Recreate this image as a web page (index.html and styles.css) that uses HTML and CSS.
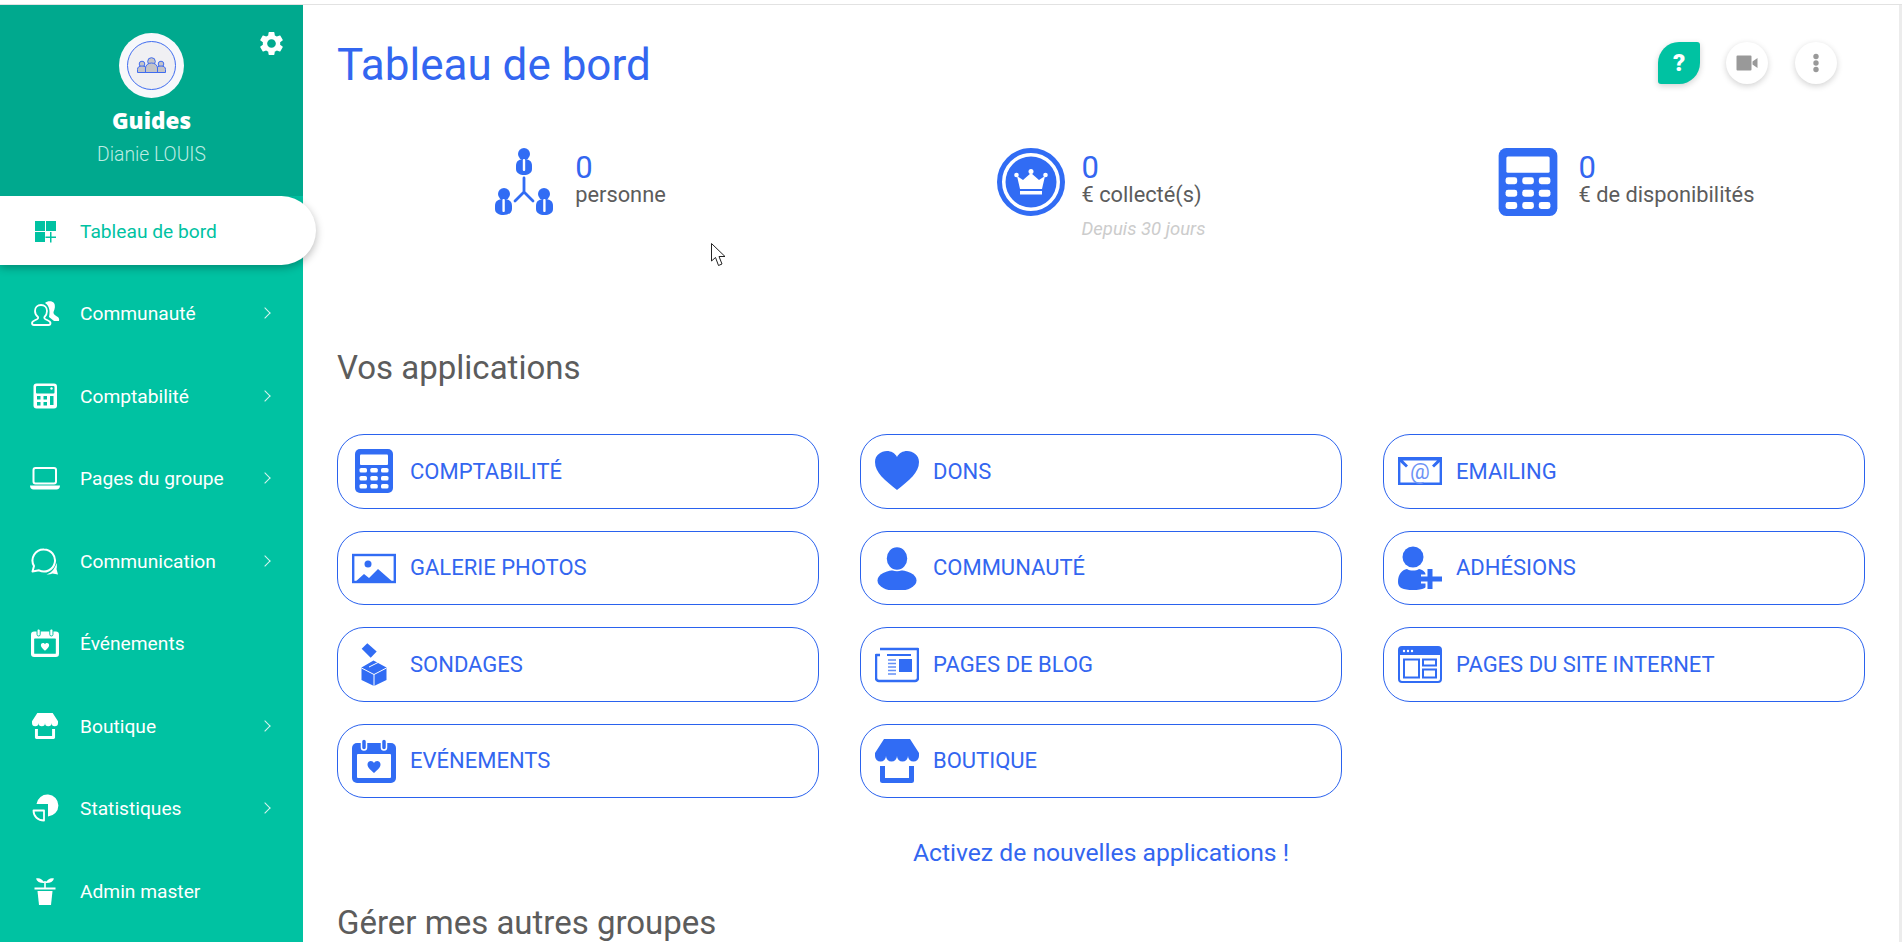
FILE: index.html
```html
<!DOCTYPE html>
<html lang="fr">
<head>
<meta charset="utf-8">
<title>Tableau de bord</title>
<link rel="stylesheet" href="styles.css">
</head>
<body>
<svg class="defs" xmlns="http://www.w3.org/2000/svg">
  <symbol id="i-calc" viewBox="0 0 44 44">
    <rect x="3" y="0" width="38" height="44" rx="5" fill="currentColor"/>
    <g class="hole">
      <rect x="8" y="5.500" width="28" height="10.500" rx="1"/>
      <rect x="7.500" y="19" width="7.500" height="4.500" rx="1.600"/><rect x="18.300" y="19" width="7.500" height="4.500" rx="1.600"/><rect x="29" y="19" width="7.500" height="4.500" rx="1.600"/>
      <rect x="7.500" y="27" width="7.500" height="4.500" rx="1.600"/><rect x="18.300" y="27" width="7.500" height="4.500" rx="1.600"/><rect x="29" y="27" width="7.500" height="4.500" rx="1.600"/>
      <rect x="7.500" y="35" width="7.500" height="4.500" rx="1.600"/><rect x="18.300" y="35" width="7.500" height="4.500" rx="1.600"/><rect x="29" y="35" width="7.500" height="4.500" rx="1.600"/>
    </g>
  </symbol>
  <symbol id="i-event" viewBox="0 0 44 44">
    <rect x="0" y="4" width="44" height="40" rx="5" fill="currentColor"/>
    <rect class="hole" x="5" y="15" width="34" height="24" rx="1"/>
    <rect class="ring" x="9.500" y="0" width="5" height="11" rx="2.500" fill="currentColor"/>
    <rect class="ring" x="29.500" y="0" width="5" height="11" rx="2.500" fill="currentColor"/>
    <path d="M22 34C18 30.500 15.500 28.500 15.500 25.500C15.500 23.300 17.200 22 18.800 22C20.200 22 21.400 22.800 22 24C22.600 22.800 23.800 22 25.200 22C26.800 22 28.500 23.300 28.500 25.500C28.500 28.500 26 30.500 22 34Z" fill="currentColor"/>
  </symbol>
  <symbol id="i-shop" viewBox="0 0 44 44">
    <path d="M9 0H35L44 14V17A5.500 5.500 0 0 1 33 17A5.500 5.500 0 0 1 22 17A5.500 5.500 0 0 1 11 17A5.500 5.500 0 0 1 0 17V14Z" fill="currentColor"/>
    <path d="M7.500 27V41.500H36.500V27" fill="none" stroke="currentColor" stroke-width="5" stroke-linejoin="round"/>
  </symbol>
</svg>

<div class="topline"></div>
<div class="app">
  <aside class="sidebar">
    <header class="profile">
      <svg class="gear" viewBox="0 0 24 24"><path fill="currentColor" d="M19.140 12.940c.04-.3.06-.61.06-.94 0-.32-.02-.64-.07-.94l2.030-1.580c.18-.14.23-.41.12-.61l-1.920-3.320c-.12-.22-.37-.29-.59-.22l-2.390.96c-.5-.38-1.030-.7-1.620-.94l-.36-2.540c-.04-.24-.24-.41-.48-.41h-3.840c-.24 0-.43.17-.47.41l-.36 2.540c-.59.24-1.130.57-1.620.94l-2.390-.96c-.22-.08-.47 0-.59.22L2.740 8.870c-.12.21-.08.47.12.61l2.030 1.580c-.05.3-.09.63-.09.94s.02.64.07.94l-2.030 1.580c-.18.14-.23.41-.12.61l1.920 3.320c.12.22.37.29.59.22l2.390-.96c.5.38 1.030.7 1.620.94l.36 2.540c.05.24.24.41.48.41h3.840c.24 0 .44-.17.47-.41l.36-2.540c.59-.24 1.130-.56 1.620-.94l2.390.96c.22.08.47 0 .59-.22l1.920-3.320c.12-.22.07-.47-.12-.61l-2.010-1.580zM12 15.600c-1.980 0-3.600-1.620-3.600-3.600s1.620-3.600 3.600-3.600 3.600 1.620 3.600 3.600-1.620 3.600-3.600 3.600z"/></svg>
      <div class="avatar">
        <svg viewBox="0 0 65 65" width="65" height="65">
          <circle cx="32.500" cy="32.500" r="32.500" fill="#f7f8fb"/>
          <circle cx="32.500" cy="32.500" r="24" fill="#f0f0f3" stroke="#3f6cf0" stroke-width="1"/>
          <g fill="#c4c4c8" stroke="#3f6cf0" stroke-width="1">
            <circle cx="23" cy="31" r="2.800"/><path d="M18.500 39.500v-3a4.500 3.500 0 0 1 9 0v3z"/>
            <circle cx="42" cy="31" r="2.800"/><path d="M37.500 39.500v-3a4.500 3.500 0 0 1 9 0v3z"/>
            <circle cx="32.500" cy="28.500" r="3.800"/><path d="M26.500 39.500v-4.500a6 5 0 0 1 12 0v4.500z"/>
          </g>
        </svg>
      </div>
      <div class="group-name">Guides</div>
      <div class="user-name">Dianie LOUIS</div>
    </header>
    <nav class="nav">
      <a class="nav-item active">
        <svg class="nav-icon" viewBox="0 0 30 30"><g fill="currentColor"><rect x="5" y="5" width="10" height="10"/><rect x="16" y="5" width="10" height="10"/><rect x="5" y="16" width="10" height="10"/><path d="M20 16h1.500v4.500H26V22h-4.500v4.500H20V22h-4.500v-1.500H20z"/></g></svg>
        <span class="nav-label">Tableau de bord</span>
      </a>
      <a class="nav-item">
        <svg class="nav-icon" viewBox="0 0 30 30"><path d="M15 5C17 3 22 2.500 24 5C25.500 7 25 11 23.500 14C23 16 25 17 27 18.500C29 19.500 29.500 21 29 23H24L19 19C20 14 20 8 15 5Z" fill="currentColor"/><path d="M11 7c3.500 0 6 2.500 6 6 0 2.500-1 4.500-2.500 6-.5 1 0 1.800 1.500 2.500 2.500 1.200 4.500 1.800 4.500 3.500 0 1.500-.8 2-2 2H4c-1.200 0-2-.5-2-2 0-1.700 2-2.300 4.500-3.500 1.500-.7 2-1.500 1.500-2.500C6 17.500 5 15.500 5 13c0-3.500 2.500-6 6-6z" fill="none" stroke="currentColor" stroke-width="1.800" stroke-linejoin="round"/></svg>
        <span class="nav-label">Communauté</span><span class="chev"></span>
      </a>
      <a class="nav-item">
        <svg class="nav-icon" viewBox="0 0 30 30"><rect x="3.500" y="2.500" width="23.500" height="25" rx="3" fill="currentColor"/><g class="hole"><rect x="6" y="5" width="18.500" height="7.500" rx="1"/><rect x="7" y="15" width="3.500" height="3.500"/><rect x="13.500" y="15" width="3.500" height="3.500"/><rect x="20" y="15" width="3.500" height="9"/><rect x="7" y="21" width="3.500" height="3.500"/><rect x="13.500" y="21" width="3.500" height="3.500"/></g><circle cx="21.500" cy="7.500" r="1.200" fill="#fff"/></svg>
        <span class="nav-label">Comptabilité</span><span class="chev"></span>
      </a>
      <a class="nav-item">
        <svg class="nav-icon" viewBox="0 0 30 30"><rect x="3.500" y="5" width="22.500" height="15.500" rx="2" fill="none" stroke="currentColor" stroke-width="2"/><path d="M0 22.500h30c0 2.500-1.500 4-3.500 4h-23C1.500 26.500 0 25 0 22.500z" fill="currentColor"/></svg>
        <span class="nav-label">Pages du groupe</span><span class="chev"></span>
      </a>
      <a class="nav-item">
        <svg class="nav-icon" viewBox="0 0 30 30"><path d="M14 3.500a11 11 0 1 1-5 20.800L2.500 25.500 4 20A11 11 0 0 1 14 3.500z" fill="none" stroke="currentColor" stroke-width="2" stroke-linejoin="round"/><path d="M26.500 17c.5 2 .5 4.500 0 6l1.500 5.500-5.500-1c-2 1-4 1.300-6 1 3-1 8-4 10-11.500z" fill="currentColor"/></svg>
        <span class="nav-label">Communication</span><span class="chev"></span>
      </a>
      <a class="nav-item">
        <svg class="nav-icon nav-sym"><use href="#i-event"/></svg>
        <span class="nav-label">Événements</span>
      </a>
      <a class="nav-item">
        <svg class="nav-icon nav-sym shop"><use href="#i-shop"/></svg>
        <span class="nav-label">Boutique</span><span class="chev"></span>
      </a>
      <a class="nav-item">
        <svg class="nav-icon" viewBox="0 0 30 30"><path d="M5.500 12.500A11 11 0 1 1 17 25V12.500z" fill="currentColor" transform="translate(1 -1.500)"/><path d="M3.500 17.500h10.500V27.500C8 27.500 3.500 23.500 3.500 17.500z" fill="none" stroke="currentColor" stroke-width="1.800" stroke-linejoin="round"/></svg>
        <span class="nav-label">Statistiques</span>
        <span class="chev"></span>
      </a>
      <a class="nav-item">
        <svg class="nav-icon" viewBox="0 0 30 30"><g fill="currentColor"><path d="M15 7C12 2.500 9 1.500 6 2.500 7 6 10.500 7.500 15 7z"/><path d="M15 7C18 2.500 21 1.500 24 2.500 23 6 19.500 7.500 15 7z"/><rect x="14.200" y="5" width="1.600" height="8"/><rect x="4.500" y="11.500" width="21" height="2"/><path d="M7.500 15h15l-1.500 14H9z"/></g></svg>
        <span class="nav-label">Admin master</span>
      </a>
    </nav>
  </aside>

  <main class="main">
    <div class="page-head">
      <h1 class="page-title">Tableau de bord</h1>
      <div class="tools">
        <button class="tool tool-help">?</button>
        <button class="tool"><svg viewBox="0 0 24 24" width="24" height="24"><path fill="#999" d="M1.500 5.500a1 1 0 0 1 1-1h13a1 1 0 0 1 1 1v13a1 1 0 0 1-1 1h-13a1 1 0 0 1-1-1zM17.500 10.500l5-3.500v10l-5-3.500z"/></svg></button>
        <button class="tool"><svg viewBox="0 0 24 24" width="24" height="24"><g fill="#999"><circle cx="12" cy="5.500" r="2.700"/><circle cx="12" cy="12" r="2.700"/><circle cx="12" cy="18.500" r="2.700"/></g></svg></button>
      </div>
    </div>

    <section class="stats">
      <div class="stat">
        <svg class="stat-icon" viewBox="0 0 68 68">
          <g fill="currentColor">
            <circle cx="34" cy="6" r="6"/><path d="M26 18c0-5 3-7 8-7s8 2 8 7v3c0 4-4 6-8 6s-8-2-8-6z"/>
            <circle cx="14" cy="46" r="6"/><path d="M5 58c0-5 3-7 8.500-7s8.500 2 8.500 7v3c0 4-4 6-8.500 6S5 65 5 61z"/>
            <circle cx="54" cy="46" r="6"/><path d="M46 58c0-5 3-7 8.500-7s8.500 2 8.500 7v3c0 4-4 6-8.500 6S46 65 46 61z"/>
          </g>
          <g fill="#fff"><rect x="32.800" y="11" width="2.400" height="12" rx="1"/><rect x="12.400" y="51" width="2.400" height="13" rx="1"/><rect x="53.200" y="51" width="2.400" height="13" rx="1"/></g>
          <path d="M34 30V44L25 53M34 44L43 53" fill="none" stroke="currentColor" stroke-width="2.800" stroke-linecap="round" stroke-linejoin="round"/>
        </svg>
        <div class="stat-text"><div class="stat-value">0</div><div class="stat-label">personne</div></div>
      </div>
      <div class="stat">
        <svg class="stat-icon" viewBox="0 0 68 68">
          <circle cx="34" cy="34" r="31.500" fill="none" stroke="currentColor" stroke-width="5"/>
          <circle cx="34" cy="34" r="25.500" fill="currentColor"/>
          <g fill="#fff">
            <path d="M20 28l6 4 8-7 8 7 6-4-3 13H23z"/>
            <circle cx="19.500" cy="27" r="2.300"/><circle cx="34" cy="23.500" r="2.500"/><circle cx="48.500" cy="27" r="2.300"/>
            <rect x="23" y="43" width="22" height="3.500"/>
          </g>
        </svg>
        <div class="stat-text"><div class="stat-value">0</div><div class="stat-label">€ collecté(s)</div><div class="stat-note">Depuis 30 jours</div></div>
      </div>
      <div class="stat">
        <svg class="stat-icon"><use href="#i-calc"/></svg>
        <div class="stat-text"><div class="stat-value">0</div><div class="stat-label">€ de disponibilités</div></div>
      </div>
    </section>

    <h2 class="section-title apps-title">Vos applications</h2>

    <section class="apps">
      <a class="app-btn"><svg class="app-icon"><use href="#i-calc"/></svg><span>COMPTABILITÉ</span></a>
      <a class="app-btn"><svg class="app-icon" viewBox="0 0 44 44"><path fill="currentColor" d="M22 41C10 31 0 24 0 13C0 6 6 2 12 2C16 2 20 4 22 8C24 4 28 2 32 2C38 2 44 6 44 13C44 24 34 31 22 41Z"/></svg><span>DONS</span></a>
      <a class="app-btn"><svg class="app-icon" viewBox="0 0 44 44"><path d="M1.200 10V34.800H42.800V10" fill="none" stroke="currentColor" stroke-width="2.400"/><path d="M0 8H44V11L36 18.500 34 16.500 39 11.500H5L10 16.500 8 18.500 0 11Z" fill="currentColor"/><text x="22" y="30" class="at">@</text></svg><span>EMAILING</span></a>

      <a class="app-btn"><svg class="app-icon" viewBox="0 0 44 44"><rect x="1.200" y="9" width="41.600" height="27" fill="none" stroke="currentColor" stroke-width="2.400"/><circle cx="16" cy="18" r="3.500" fill="currentColor"/><path d="M2 37L12 28 17 32 26 23 42 37Z" fill="currentColor"/></svg><span>GALERIE PHOTOS</span></a>
      <a class="app-btn"><svg class="app-icon" viewBox="0 0 44 44"><ellipse cx="22" cy="34.500" rx="19.500" ry="10.500" fill="currentColor"/><ellipse class="ring" cx="22" cy="12.500" rx="11" ry="12" fill="currentColor"/></svg><span>COMMUNAUTÉ</span></a>
      <a class="app-btn"><svg class="app-icon" viewBox="0 0 44 44"><circle cx="15" cy="11" r="10.500" fill="currentColor"/><path d="M0 36C0 28 4 24 9 23C12 25 18 25 21 23C26 24 30 28 30 36C30 42 25 44 15 44C5 44 0 42 0 36Z" fill="currentColor"/><path d="M32 24V42M23 33H41" stroke="#fff" stroke-width="9" fill="none"/><path d="M32 23V43M22 33H44" stroke="currentColor" stroke-width="5" fill="none"/></svg><span>ADHÉSIONS</span></a>

      <a class="app-btn"><svg class="app-icon" viewBox="0 0 44 44"><path fill="currentColor" d="M9.700 6.800L15.300 1.200 24.700 9.500 18.700 15.800ZM21.500 18.500L34.500 25.500V38L22 44 9.500 38V25.500Z"/><path d="M9.500 26L22 32.500 34.500 26M22 32.500V44M17 25L26 20.500" fill="none" stroke="#fff" stroke-width="1"/></svg><span>SONDAGES</span></a>
      <a class="app-btn"><svg class="app-icon" viewBox="0 0 44 44"><path d="M5 7H43V36A3 3 0 0 1 40 39H4A3 3 0 0 1 1 36V13H5" fill="none" stroke="currentColor" stroke-width="2.500" stroke-linejoin="round"/><path d="M12 13H36" stroke="currentColor" stroke-width="2"/><rect x="24" y="17" width="13" height="13" fill="currentColor"/><path d="M13 18H21M13 21.500H21M13 25H21M13 28.500H21M13 32H21" stroke="currentColor" stroke-width="1.300" opacity=".75"/></svg><span>PAGES DE BLOG</span></a>
      <a class="app-btn"><svg class="app-icon" viewBox="0 0 44 44"><rect x="1" y="5" width="42" height="35" rx="3" fill="none" stroke="currentColor" stroke-width="2"/><path d="M1 6h42v7H1z" fill="currentColor"/><g fill="#fff"><circle cx="6" cy="9" r="1.200"/><circle cx="10" cy="9" r="1.200"/><circle cx="14" cy="9" r="1.200"/></g><g fill="none" stroke="currentColor" stroke-width="2"><rect x="6" y="17.500" width="15" height="18"/><rect x="25" y="17.500" width="13" height="6"/><rect x="25" y="27.500" width="13" height="8"/></g></svg><span>PAGES DU SITE INTERNET</span></a>

      <a class="app-btn"><svg class="app-icon"><use href="#i-event"/></svg><span>EVÉNEMENTS</span></a>
      <a class="app-btn"><svg class="app-icon"><use href="#i-shop"/></svg><span>BOUTIQUE</span></a>
    </section>

    <a class="more-link">Activez de nouvelles applications !</a>
    <h2 class="section-title other-title">Gérer mes autres groupes</h2>
  </main>
  <div class="scroll-edge"></div>
</div>

<svg class="cursor" viewBox="0 0 16 24"><path d="M.5.5V18L4.500 14.500 7.500 22.500 11 21 8 13.500H14Z" fill="#fff" stroke="#222" stroke-width="1" stroke-linejoin="round"/></svg>
</body>
</html>
```
FILE: styles.css
```css
* { box-sizing: border-box; }
html, body { margin: 0; height: 942px; overflow: hidden; }
body { background: #fff; font-family: Roboto, "Liberation Sans", sans-serif; color: #5c5c5c; position: relative; }
.defs { display: none; }
.hole { fill: var(--hole, #fff); }
.ring { stroke: var(--hole, #fff); stroke-width: 1.500; }

.topline { height: 5px; border-bottom: 1px solid #e2e2e2; }
.app { display: flex; height: 937px; }

/* sidebar */
.sidebar { width: 303px; flex: none; background: #00c2a2; position: relative; z-index: 2; }
.profile { height: 191px; background: #00a98e; position: relative; display: flex; flex-direction: column; align-items: center; padding-top: 28px; }
.gear { position: absolute; left: 257px; top: 24px; width: 29px; height: 29px; color: #fff; }
.avatar { width: 65px; height: 65px; }
.avatar svg { display: block; }
.group-name { margin-top: 8px; font-family: "Open Sans", sans-serif; font-weight: 800; font-size: 22.500px; line-height: 30px; color: #fff; }
.user-name { margin-top: 7px; font-weight: 300; font-size: 19.300px; line-height: 24px; color: #bdece2; }

.nav { display: flex; flex-direction: column; gap: 13.500px; }
.nav-item { height: 69px; display: flex; align-items: center; padding-left: 30px; color: #fff; --hole: #00c2a2; }
.nav-item.active { width: 316px; background: #fff; color: #00c2a2; border-radius: 0 35px 35px 0; box-shadow: 0 3px 8px rgba(0,0,0,.28); }
.nav-icon { width: 30px; height: 30px; flex: none; display: block; }
.nav-sym { padding: 1px; }
.nav-sym.shop { padding: 2px; }
.nav-label { margin-left: 20px; padding-top: 1px; font-size: 19.200px; flex: 1; }
.chev { width: 8px; height: 8px; border-top: 1.500px solid #d9f5ef; border-right: 1.500px solid #d9f5ef; transform: rotate(45deg); margin-right: 34px; }

/* main */
.main { flex: 1; min-width: 0; padding: 37px 34px 0; }
.page-head { display: flex; align-items: center; justify-content: space-between; height: 42px; }
.page-title { margin: 4px 0 0; font-weight: 400; font-size: 44px; line-height: 42px; color: #3366f0; }
.tools { display: flex; gap: 27px; margin-right: 28px; }
.tool { width: 42px; height: 42px; border: 0; border-radius: 50%; background: #fff; box-shadow: 0 2px 6px rgba(0,0,0,.18); display: flex; align-items: center; justify-content: center; padding: 0; }
.tool-help { background: #00c2a2; border-radius: 50% 3px 50% 3px; color: #fff; font: 900 24px Roboto, sans-serif; margin-right: -1px; }

.stats { display: grid; grid-template-columns: repeat(3, 1fr); column-gap: 41px; margin-top: 64px; height: 102px; }
.stat { display: flex; justify-content: center; align-items: flex-start; }
.stat-icon { width: 68px; height: 68px; flex: none; color: #316cf4; margin-right: 17px; }
.stat-value { font-size: 31px; line-height: 30px; color: #3366f0; margin-top: 5px; }
.stat-label { font-size: 21.800px; line-height: 24px; }
.stat-note { font-size: 18.500px; line-height: 22px; font-style: italic; color: #ccc; margin-top: 11px; }

.section-title { margin: 0; font-weight: 400; font-size: 33px; line-height: 36px; color: #5c5c5c; }
.apps-title { margin-top: 100px; }
.apps { display: grid; grid-template-columns: repeat(3, 482px); column-gap: 41px; row-gap: 22px; margin-top: 48px; }
.app-btn { height: 74.500px; border: 1px solid #2a62ee; border-radius: 27px; display: flex; align-items: center; padding-left: 14px; color: #3366f0; font-size: 22px; }
.app-icon { width: 44px; height: 44px; flex: none; color: #316cf4; margin-right: 14px; }
.at { font: 400 22px Roboto, sans-serif; fill: #6d93f5; text-anchor: middle; }

.more-link { display: block; text-align: center; margin-top: 40px; font-size: 24.700px; line-height: 30px; color: #3366f0; }
.other-title { margin-top: 37px; }

.scroll-edge { width: 3px; flex: none; background: #ececec; }
.cursor { position: absolute; left: 711px; top: 243px; width: 16px; height: 24px; z-index: 5; }
```
